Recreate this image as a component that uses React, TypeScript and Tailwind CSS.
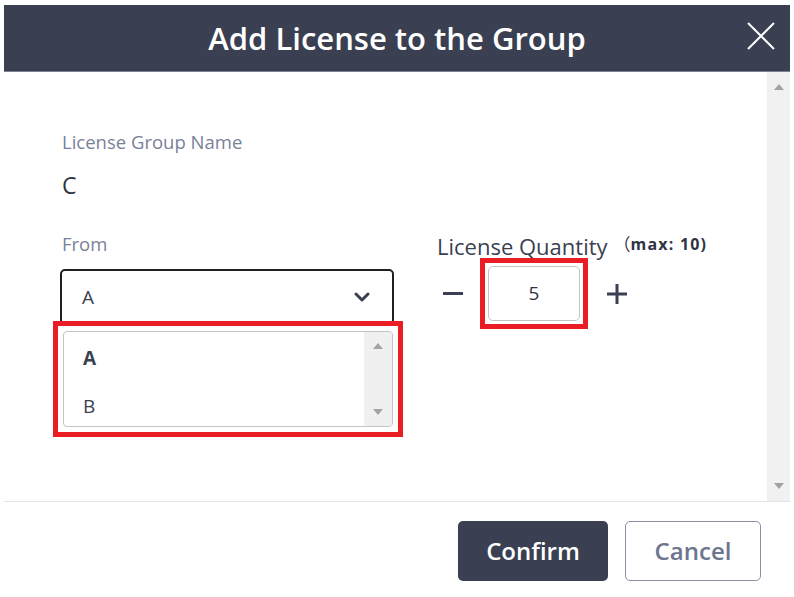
import React from "react";

const font = { fontFamily: '"Open Sans", "Noto Sans", sans-serif' };

function ScrollArrowUp() {
  return (
    <svg width="10" height="6" viewBox="0 0 10 6">
      <polygon points="0,6 10,6 5,0" fill="#a3a3a3" />
    </svg>
  );
}
function ScrollArrowDown() {
  return (
    <svg width="10" height="6" viewBox="0 0 10 6">
      <polygon points="0,0 10,0 5,6" fill="#a3a3a3" />
    </svg>
  );
}

export default function App() {
  return (
    <div className="w-[794px] h-[597px] bg-white pt-[5px] px-[4px] overflow-hidden" style={font}>
      <div className="w-[786px] flex flex-col">
        {/* Header */}
        <div className="h-[67px] bg-[#3a3f51] border-b border-[#7d8190] flex items-center justify-center relative">
          <span className="text-white text-[31px] font-semibold leading-none">
            Add License to the Group
          </span>
          <svg
            className="absolute right-[15px] top-[17px]"
            width="28"
            height="28"
            viewBox="0 0 28 28"
          >
            <path d="M1 1 L27 27 M27 1 L1 27" stroke="#ffffff" strokeWidth="2" fill="none" />
          </svg>
        </div>

        {/* Body */}
        <div className="h-[430px] flex border-b border-[#e3e4ea]">
          <div className="flex-1 pl-[58px] pt-[58px]">
            <div className="text-[18.5px] leading-[24px] text-[#7a8199]">License Group Name</div>
            <div className="mt-[16px] text-[23px] leading-[30px] text-[#2f3443] font-medium">C</div>
            <div className="mt-[32px] flex">
              {/* From */}
              <div className="w-[332px] flex flex-col">
                <div className="text-[18.5px] leading-[24px] text-[#7a8199]">From</div>
                <div className="mt-[13px] -ml-[2px] h-[56px] border-2 border-[#1f1f1f] rounded-[5px] flex items-center justify-between pl-[20px] pr-[22px]">
                  <span className="text-[19px] text-[#3a3f51]">A</span>
                  <svg width="16" height="10" viewBox="0 0 16 10">
                    <path d="M2 2 L8 8 L14 2" stroke="#3a3f51" strokeWidth="3" fill="none" strokeLinecap="round" strokeLinejoin="round" />
                  </svg>
                </div>
                <div className="relative z-10 -mt-[4px] -mx-[9px] border-[5px] border-[#ea1c24] p-[5px]">
                  <div className="h-[96px] border border-[#c4c4c4] rounded-[4px] flex overflow-hidden">
                    <div className="flex-1 flex flex-col pl-[19px] pt-[14px]">
                      <div className="h-[24px] flex items-center text-[19px] font-bold text-[#3a3f51]">A</div>
                      <div className="mt-[24px] h-[24px] flex items-center text-[19px] text-[#3a3f51]">B</div>
                    </div>
                    <div className="w-[28px] bg-[#f0f0f0] flex flex-col items-center justify-between py-[11px]">
                      <ScrollArrowUp />
                      <ScrollArrowDown />
                    </div>
                  </div>
                </div>
              </div>

              {/* Quantity */}
              <div className="ml-[43px] flex flex-col">
                <div className="flex items-start h-[26px]">
                  <span className="text-[22px] leading-[26px] text-[#3a3f51] mt-[1px]">License Quantity</span>
                  <span className="ml-[6px] mt-[1px] flex items-center text-[16px] leading-[22px] text-[#2f3443]">
                    <span className="text-[17px]" style={{ fontFamily: '"Noto Sans CJK KR", sans-serif' }}>（</span>
                    <span className="font-bold tracking-[1.2px]">max: 10)</span>
                  </span>
                </div>
                <div className="flex items-center">
                  <svg width="20" height="4" viewBox="0 0 20 4" className="ml-[6px]">
                    <rect x="0" y="0" width="20" height="3" fill="#3a3f51" />
                  </svg>
                  <div className="ml-[17px] border-[5px] border-[#ea1c24] p-[3px]">
                    <div className="w-[92px] h-[55px] border border-[#c4c4c4] rounded-[5px] flex items-center justify-center text-[19px] text-[#2f3443]">
                      5
                    </div>
                  </div>
                  <svg width="20" height="20" viewBox="0 0 20 20" className="ml-[19px]">
                    <rect x="0" y="8.5" width="20" height="3" fill="#3a3f51" />
                    <rect x="8.5" y="0" width="3" height="20" fill="#3a3f51" />
                  </svg>
                </div>
              </div>
            </div>
          </div>
          {/* Scrollbar */}
          <div className="w-[23px] bg-[#f1f1f1] flex flex-col items-center justify-between pt-[12px] pb-[12px]">
            <ScrollArrowUp />
            <ScrollArrowDown />
          </div>
        </div>

        {/* Footer */}
        <div className="flex justify-end pt-[19px] pr-[29px] gap-[17px]">
          <button className="w-[150px] h-[60px] bg-[#3a3f51] rounded-[5px] text-white text-[24px] font-semibold">
            Confirm
          </button>
          <button className="w-[136px] h-[60px] bg-white border border-[#8b90a8] rounded-[5px] text-[#6d7590] text-[24px] font-semibold">
            Cancel
          </button>
        </div>
      </div>
    </div>
  );
}
